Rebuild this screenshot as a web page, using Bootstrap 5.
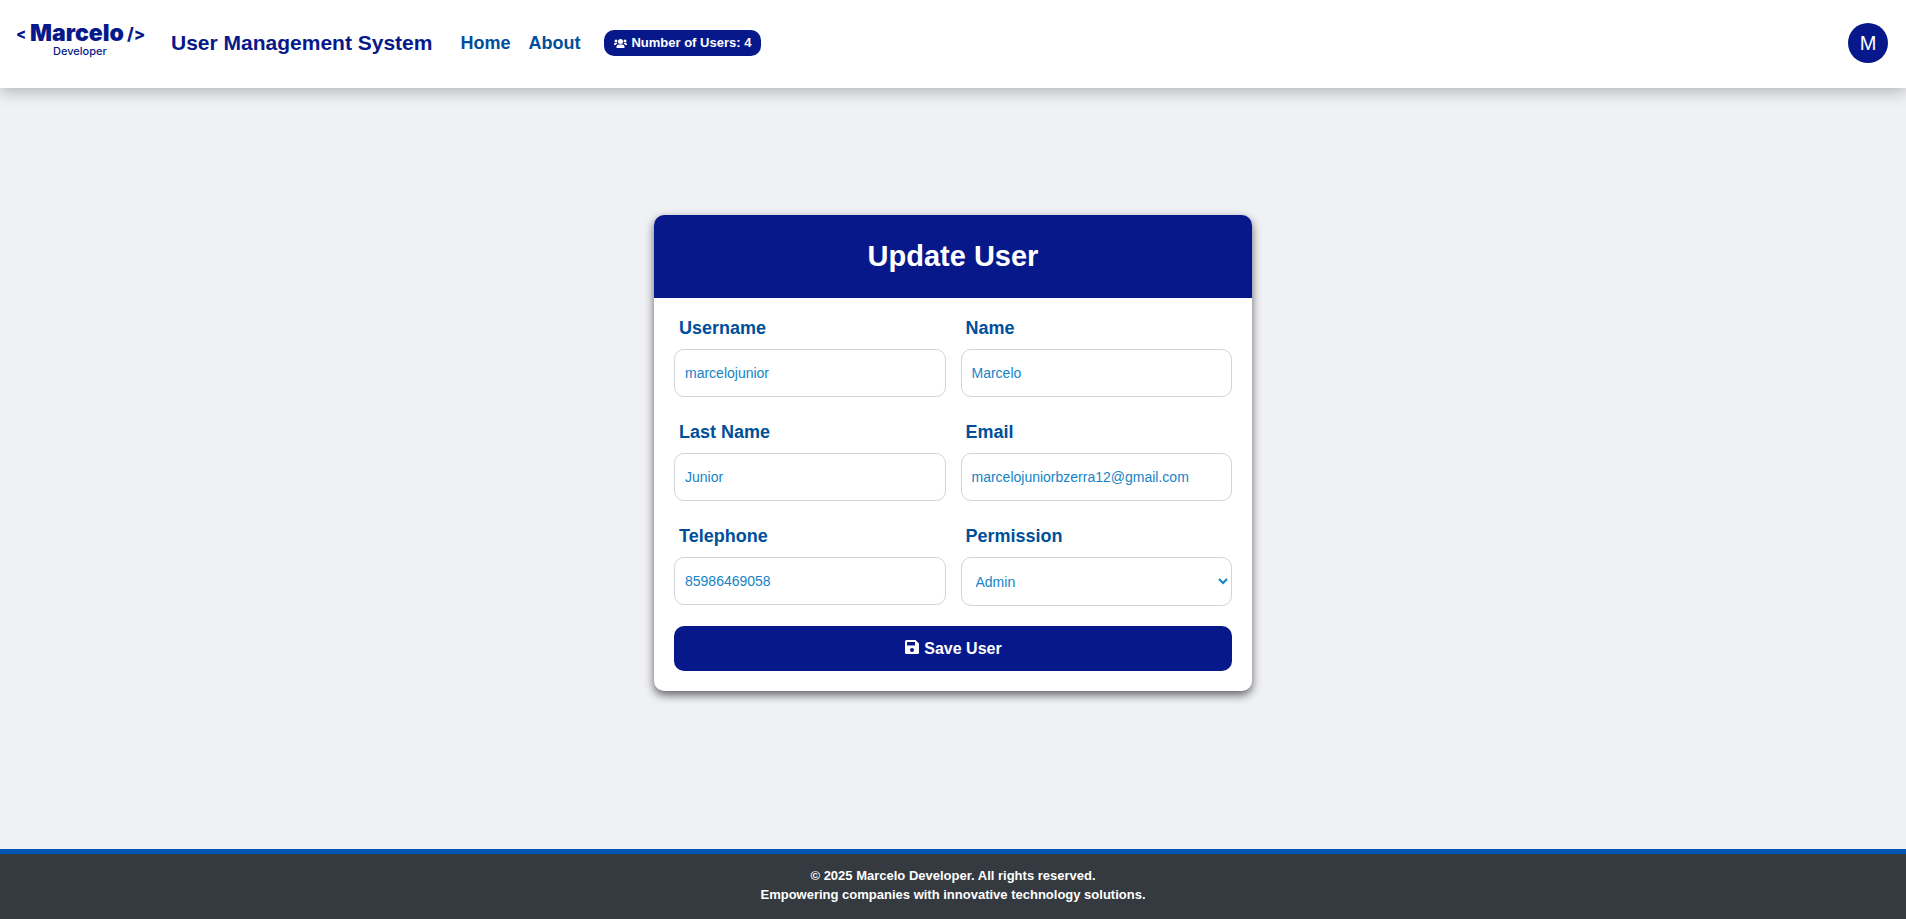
<!DOCTYPE html>
<html lang="en">
<head>
<meta charset="utf-8">
<meta name="viewport" content="width=device-width, initial-scale=1">
<title>User Management System</title>
<link href="https://cdn.jsdelivr.net/npm/bootstrap@5.3.0/dist/css/bootstrap.min.css" rel="stylesheet">
<style>
  :root { --navy: #07198a; --blue: #004f9a; --sky: #1583c7; }
  body { font-family: "Liberation Sans", Arial, sans-serif; background: #f0f1f5; }
  .site-header { min-height: 88px; padding: 0 18px 2px 12px; background: #fff; box-shadow: 0 4px 15px rgba(0, 0, 0, .25); }
  .logo { width: 136px; height: 48px; }
  .logo text { font-family: Inter, sans-serif; fill: var(--navy); }
  .site-title { color: var(--navy); font-size: 21px; font-weight: 700; margin: 0 28px 0 23px; }
  .site-title:hover { color: var(--navy); }
  .menu { gap: 18px; }
  .menu-link { color: var(--blue); font-size: 18px; font-weight: 700; text-decoration: none; }
  .user-count { background: var(--navy); color: #fff; font-size: 13px; font-weight: 700; line-height: 16px; border-radius: 10px; padding: 5px 10px; margin-left: 24px; }
  .avatar { width: 40px; height: 40px; background: var(--navy); color: #fff; font-size: 20px; border: 0; }
  main { padding-bottom: 31px; }
  .user-card { width: 598px; max-width: 100%; border: 0; border-radius: 10px; overflow: hidden; box-shadow: 0 4px 10px rgba(0, 0, 0, .6); }
  .user-card-head { background: var(--navy); color: #fff; padding: 20px; }
  .user-card-head h1 { font-size: 29px; font-weight: 700; line-height: 43px; margin: 0; }
  .user-card .card-body { padding: 20px; }
  .fields { --bs-gutter-x: 15px; --bs-gutter-y: 25px; }
  .fields label { display: block; color: var(--blue); font-size: 18px; font-weight: 700; line-height: 21px; margin: 0 0 10px 5px; }
  .field-box { display: block; width: 100%; height: 48px; border: 1px solid #ced4da; border-radius: 10px; background: #fff; color: var(--sky); font-size: 14px; padding: 0 10px; }
  select.field-box { height: 49px; }
  .save { background: var(--navy); color: #fff; font-size: 16px; font-weight: 700; height: 45px; border: 0; border-radius: 10px; margin-top: 20px; }
  .save svg { margin-bottom: 3px; }
  .site-footer { background: #343a40; color: #fff; border-top: 5px solid #0056b3; padding: 12px 16px 15px; font-size: 13px; font-weight: 700; line-height: 19px; }
</style>
</head>
<body class="d-flex flex-column min-vh-100">
<header class="site-header d-flex align-items-center">
  <a href="#" aria-label="Marcelo Developer">
    <svg class="logo d-block" viewBox="0 0 136 48">
      <text x="4" y="20" font-size="15" font-weight="800">&lt;</text>
      <text x="18" y="22" font-size="23" font-weight="900">Marcelo</text>
      <text x="115" y="21" font-size="17" font-weight="800">/&gt;</text>
      <text x="41" y="36" font-size="11" font-weight="500">Developer</text>
    </svg>
  </a>
  <a class="site-title text-decoration-none" href="#">User Management System</a>
  <nav class="menu d-flex">
    <a class="menu-link" href="#">Home</a>
    <a class="menu-link" href="#">About</a>
  </nav>
  <span class="user-count d-flex align-items-center gap-1">
    <svg width="13" height="11" viewBox="0 0 26 22" fill="#fff" aria-hidden="true">
      <circle cx="13" cy="7" r="5"/><circle cx="4" cy="6" r="3"/><circle cx="22" cy="6" r="3"/>
      <path d="M5 20v-3q0-4 5-4h6q5 0 5 4v3zM0 14v-2q0-2 3-2h2q2 0 2 1-3 1-4 3zM26 14v-2q0-2-3-2h-2q-2 0-2 1 3 1 4 3z"/>
    </svg>
    <span>Number of Users: 4</span>
  </span>
  <button type="button" class="avatar rounded-circle ms-auto p-0">M</button>
</header>

<main class="flex-grow-1 d-flex align-items-center justify-content-center">
  <section class="card user-card">
    <div class="user-card-head text-center"><h1>Update User</h1></div>
    <form class="card-body">
      <div class="row fields">
        <div class="col-6"><label for="username">Username</label><input class="field-box" id="username" type="text" value="marcelojunior"></div>
        <div class="col-6"><label for="name">Name</label><input class="field-box" id="name" type="text" value="Marcelo"></div>
        <div class="col-6"><label for="lastname">Last Name</label><input class="field-box" id="lastname" type="text" value="Junior"></div>
        <div class="col-6"><label for="email">Email</label><input class="field-box" id="email" type="email" value="marcelojuniorbzerra12@gmail.com"></div>
        <div class="col-6"><label for="phone">Telephone</label><input class="field-box" id="phone" type="tel" value="85986469058"></div>
        <div class="col-6"><label for="permission">Permission</label><select class="field-box" id="permission"><option>Admin</option><option>User</option></select></div>
      </div>
      <button type="button" class="save w-100 d-flex align-items-center justify-content-center gap-1">
        <svg width="16" height="16" viewBox="0 0 16 16" aria-hidden="true"><path fill="#fff" fill-rule="evenodd" d="M2.500 1H11.500L15 4.500V13.500Q15 15 13.500 15H2.500Q1 15 1 13.500V2.500Q1 1 2.500 1zM3 3V6.500H11V3zM8 9a2 2 0 1 0 0 4 2 2 0 0 0 0-4z"/></svg>
        <span>Save User</span>
      </button>
    </form>
  </section>
</main>

<footer class="site-footer text-center">
  <div>© 2025 Marcelo Developer. All rights reserved.</div>
  <div>Empowering companies with innovative technology solutions.</div>
</footer>
<script src="https://cdn.jsdelivr.net/npm/bootstrap@5.3.0/dist/js/bootstrap.bundle.min.js"></script>
</body>
</html>
